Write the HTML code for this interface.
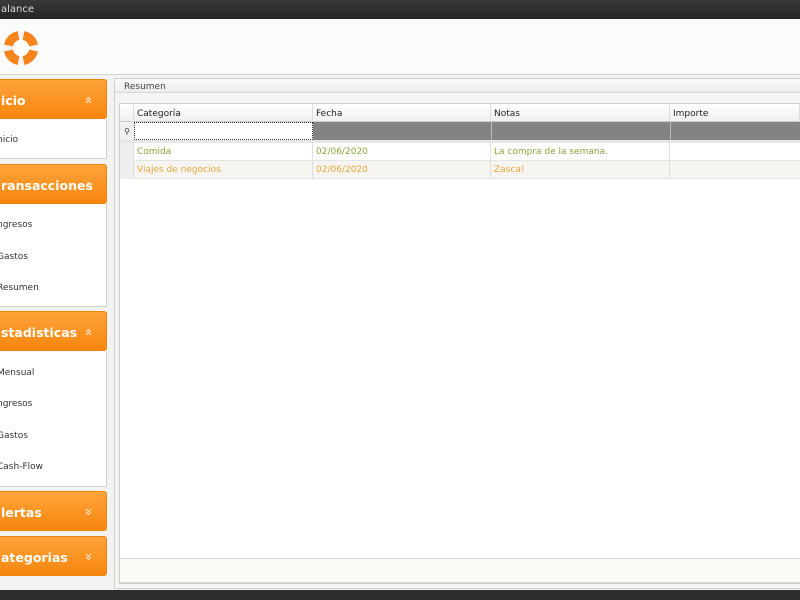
<!DOCTYPE html>
<html><head><meta charset="utf-8"><style>
*{margin:0;padding:0;box-sizing:border-box}
body{width:800px;height:600px;overflow:hidden;background:#f2f2f0;font-family:"DejaVu Sans","Liberation Sans",sans-serif;font-size:9px;color:#333;position:relative}
.a{position:absolute}
.title{left:0;top:0;width:800px;height:19px;background:linear-gradient(#3a3a3a,#262626);color:#ddd;font-size:10px;line-height:20px;padding-left:1px}
.hdr{left:0;top:19px;width:800px;height:56px;background:#fbfbfa;border-bottom:1px solid #d6d6d6}
.ph{left:-4px;width:111px;height:40px;border-radius:3px;background:linear-gradient(#ffa43a,#f7860f);color:#fff;font-weight:bold;font-size:12.5px;line-height:41px;padding-left:4px;border:1px solid #e9850f}
.ph svg{position:absolute;right:14px;top:16px}
.pb{left:-4px;width:111px;background:#fff;border:1px solid #cfcfcf;border-top:none}
.it{position:absolute;left:0;font-size:9px;color:#333}
.main{left:114px;top:78px;width:690px;height:511px;border:1px solid #d0d0d0;background:#f4f4f2}
.rh{left:115px;top:79px;width:690px;height:14px;background:linear-gradient(#fafafa,#ececea);border-bottom:1px solid #d8d8d8;color:#444;font-size:9px;padding-left:9px;line-height:16px}
.grid{left:119px;top:103px;width:690px;height:481px;background:#fff;border:1px solid #ccc}
.c{position:absolute;height:18px;line-height:21px;padding-left:3px;font-size:9px;border-right:1px solid #ddd}
</style></head><body>
<div class="a title">alance</div>
<div class="a hdr"></div>
<svg class="a" style="left:4px;top:31px" width="34" height="34" viewBox="0 0 34 34">
<circle cx="17" cy="17" r="16" fill="#f4f4f4"/>
<g fill="none" stroke="#f5841c" stroke-width="9">
<path d="M4.5 14.5 A12.5 12.5 0 0 1 14.5 4.5"/>
<path d="M19.5 4.5 A12.5 12.5 0 0 1 29.5 14.5"/>
<path d="M29.5 19.5 A12.5 12.5 0 0 1 19.5 29.5"/>
<path d="M14.5 29.5 A12.5 12.5 0 0 1 4.5 19.5"/>
</g>
<circle cx="17" cy="17" r="8" fill="#fff"/>
</svg>

<svg width="0" height="0" style="position:absolute"><defs>
<g id="up"><path d="M1 4 L3.5 1.5 L6 4 M1 7 L3.5 4.5 L6 7" fill="none" stroke="#ffe2c0" stroke-width="1.2"/></g>
<g id="dn"><path d="M1 1 L3.5 3.5 L6 1 M1 4 L3.5 6.5 L6 4" fill="none" stroke="#ffe2c0" stroke-width="1.2"/></g>
</defs></svg>

<div class="a ph" style="top:79px">icio<svg width="7" height="8"><use href="#up"/></svg></div>
<div class="a pb" style="top:119px;height:40px"><div class="it" style="top:16px">nicio</div></div>
<div class="a ph" style="top:164px">ransacciones<svg width="7" height="8"><use href="#up"/></svg></div>
<div class="a pb" style="top:204px;height:103px">
<div class="it" style="top:16px">ngresos</div><div class="it" style="top:48px">Gastos</div><div class="it" style="top:79px">Resumen</div></div>
<div class="a ph" style="top:311px">stadisticas<svg width="7" height="8"><use href="#up"/></svg></div>
<div class="a pb" style="top:351px;height:136px">
<div class="it" style="top:17px">Mensual</div><div class="it" style="top:48px">ngresos</div><div class="it" style="top:80px">Gastos</div><div class="it" style="top:111px">Cash-Flow</div></div>
<div class="a ph" style="top:491px">lertas<svg width="7" height="8"><use href="#dn"/></svg></div>
<div class="a ph" style="top:536px">ategorias<svg width="7" height="8"><use href="#dn"/></svg></div>

<div class="a main"></div>
<div class="a rh">Resumen</div>
<div class="a grid"></div>
<div class="a" style="left:120px;top:104px;width:680px;height:18px;background:linear-gradient(#fff,#f0f0f0);border-bottom:1px solid #ccc"></div>
<div class="a c" style="left:120px;top:104px;width:14px"></div>
<div class="a c" style="left:134px;top:104px;width:179px;color:#222">Categoría</div>
<div class="a c" style="left:313px;top:104px;width:178px;color:#222">Fecha</div>
<div class="a c" style="left:491px;top:104px;width:179px;color:#222">Notas</div>
<div class="a c" style="left:670px;top:104px;width:130px;color:#222">Importe</div>
<div class="a" style="left:120px;top:122px;width:14px;height:18px;background:#f0f0f0;font-size:8px;line-height:19px;text-align:center">&#9906;</div>
<div class="a" style="left:134px;top:122px;width:179px;height:18px;background:#fff;border:1px dotted #333"></div>
<div class="a" style="left:313px;top:122px;width:487px;height:18px;background:#838383"></div>
<div class="a" style="left:491px;top:122px;width:1px;height:18px;background:#bbb"></div>
<div class="a" style="left:670px;top:122px;width:1px;height:18px;background:#bbb"></div>
<div class="a" style="left:120px;top:140px;width:680px;height:3px;background:#e6e6e6"></div>
<div class="a" style="left:120px;top:143px;width:680px;height:18px;background:#fff;border-bottom:1px solid #e4e4e4"></div>
<div class="a" style="left:120px;top:161px;width:680px;height:18px;background:#f6f5f2;border-bottom:1px solid #e4e4e4"></div>
<div class="a" style="left:120px;top:143px;width:14px;height:36px;background:#efefef;border-right:1px solid #ddd"></div>
<div class="a c" style="left:134px;top:142px;width:179px;color:#8aa53a">Comida</div>
<div class="a c" style="left:313px;top:142px;width:178px;color:#8aa53a">02/06/2020</div>
<div class="a c" style="left:491px;top:142px;width:179px;color:#8aa53a">La compra de la semana.</div>
<div class="a c" style="left:134px;top:160px;width:179px;color:#e9a73a">Viajes de negocios</div>
<div class="a c" style="left:313px;top:160px;width:178px;color:#e9a73a">02/06/2020</div>
<div class="a c" style="left:491px;top:160px;width:179px;color:#e9a73a">Zasca!</div>
<div class="a" style="left:120px;top:558px;width:680px;height:25px;background:#fafaf7;border-top:1px solid #d4d4d4;border-bottom:1px solid #d4d4d4"></div>
<div class="a" style="left:0;top:590px;width:800px;height:10px;background:#2e2e2e"></div>
</body></html>
